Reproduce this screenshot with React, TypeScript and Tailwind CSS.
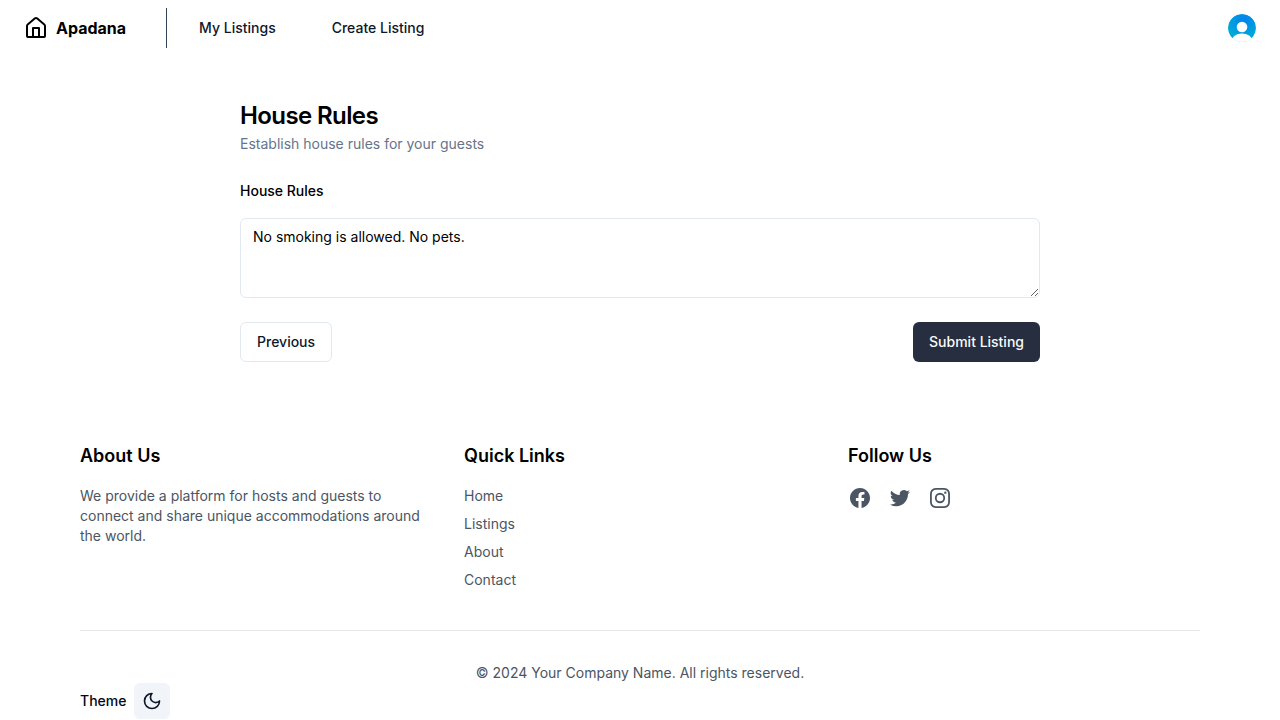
const followIcons = [
  {
    name: "Facebook",
    path: "M22 12c0-5.523-4.477-10-10-10S2 6.477 2 12c0 4.991 3.657 9.128 8.438 9.878v-6.987h-2.54V12h2.54V9.797c0-2.506 1.492-3.89 3.777-3.89 1.094 0 2.238.195 2.238.195v2.46h-1.26c-1.243 0-1.63.771-1.63 1.562V12h2.773l-.443 2.89h-2.33v6.988C18.343 21.128 22 16.991 22 12z",
  },
  {
    name: "Twitter",
    path: "M8.29 20.251c7.547 0 11.675-6.253 11.675-11.675 0-.178 0-.355-.012-.53A8.348 8.348 0 0022 5.92a8.19 8.19 0 01-2.357.646 4.118 4.118 0 001.804-2.27 8.224 8.224 0 01-2.605.996 4.107 4.107 0 00-6.993 3.743 11.65 11.65 0 01-8.457-4.287 4.106 4.106 0 001.27 5.477A4.072 4.072 0 012.8 9.713v.052a4.105 4.105 0 003.292 4.022 4.095 4.095 0 01-1.853.07 4.108 4.108 0 003.834 2.85A8.233 8.233 0 012 18.407a11.616 11.616 0 006.29 1.84",
  },
  {
    name: "Instagram",
    path: "M12.315 2c2.43 0 2.784.013 3.808.06 1.064.049 1.791.218 2.427.465a4.902 4.902 0 011.772 1.153 4.902 4.902 0 011.153 1.772c.247.636.416 1.363.465 2.427.048 1.067.06 1.407.06 4.123v.08c0 2.643-.012 2.987-.06 4.043-.049 1.064-.218 1.791-.465 2.427a4.902 4.902 0 01-1.153 1.772 4.902 4.902 0 01-1.772 1.153c-.636.247-1.363.416-2.427.465-1.067.048-1.407.06-4.123.06h-.08c-2.643 0-2.987-.012-4.043-.06-1.064-.049-1.791-.218-2.427-.465a4.902 4.902 0 01-1.772-1.153 4.902 4.902 0 01-1.153-1.772c-.247-.636-.416-1.363-.465-2.427-.047-1.024-.06-1.379-.06-3.808v-.63c0-2.43.013-2.784.06-3.808.049-1.064.218-1.791.465-2.427a4.902 4.902 0 011.153-1.772A4.902 4.902 0 015.45 2.525c.636-.247 1.363-.416 2.427-.465C8.901 2.013 9.256 2 11.685 2h.63zm-.081 1.802h-.468c-2.456 0-2.784.011-3.807.058-.975.045-1.504.207-1.857.344-.467.182-.8.398-1.15.748-.35.35-.566.683-.748 1.15-.137.353-.3.882-.344 1.857-.047 1.023-.058 1.351-.058 3.807v.468c0 2.456.011 2.784.058 3.807.045.975.207 1.504.344 1.857.182.466.399.8.748 1.15.35.35.683.566 1.15.748.353.137.882.3 1.857.344 1.054.048 1.37.058 4.041.058h.08c2.597 0 2.917-.01 3.96-.058.976-.045 1.505-.207 1.858-.344.466-.182.8-.398 1.15-.748.35-.35.566-.683.748-1.15.137-.353.3-.882.344-1.857.048-1.055.058-1.37.058-4.041v-.08c0-2.597-.01-2.917-.058-3.96-.045-.976-.207-1.505-.344-1.858a3.097 3.097 0 00-.748-1.15 3.098 3.098 0 00-1.15-.748c-.353-.137-.882-.3-1.857-.344-1.023-.047-1.351-.058-3.807-.058zM12 6.865a5.135 5.135 0 110 10.27 5.135 5.135 0 010-10.27zm0 1.802a3.333 3.333 0 100 6.666 3.333 3.333 0 000-6.666zm5.338-3.205a1.2 1.2 0 110 2.4 1.2 1.2 0 010-2.4z",
  },
];

const quickLinks = ["Home", "Listings", "About", "Contact"];

function Header() {
  return (
    <header className="flex h-14 items-center justify-between px-6">
      <nav className="flex h-full items-center text-sm font-medium text-[#0f172a]">
        <a href="#" className="flex items-center gap-2 text-base font-bold text-black">
          <svg className="size-6" viewBox="0 0 24 24" fill="none" stroke="currentColor" strokeWidth="2" strokeLinecap="round" strokeLinejoin="round">
            <path d="M15 21v-9H9v9" />
            <path d="M3 10a2 2 0 0 1 .709-1.528l7-5.999a2 2 0 0 1 2.582 0l7 5.999A2 2 0 0 1 21 10v10a1 1 0 0 1-1 1H4a1 1 0 0 1-1-1z" />
          </svg>
          Apadana
        </a>
        <div className="ml-10 h-10 w-px bg-[#334155]" />
        <a href="#" className="ml-8">My Listings</a>
        <a href="#" className="ml-14">Create Listing</a>
      </nav>
      <button aria-label="Account" className="size-7 overflow-hidden rounded-full">
        <svg viewBox="0 0 28 28" className="size-7">
          <defs>
            <radialGradient id="avatar" gradientUnits="userSpaceOnUse" cx="16" cy="6" r="17">
              <stop offset="0" stopColor="#0082ee" />
              <stop offset="1" stopColor="#00a8d8" />
            </radialGradient>
          </defs>
          <circle cx="14" cy="14" r="14" fill="url(#avatar)" />
          <circle cx="14" cy="13" r="5.3" fill="#fff" />
          <ellipse cx="14" cy="27" rx="10.5" ry="7.5" fill="#fff" />
        </svg>
      </button>
    </header>
  );
}

export default function App() {
  return (
    <div className="h-[720px] overflow-hidden bg-white font-['Inter',sans-serif] text-black antialiased">
      <Header />
      <main className="mx-auto mt-11 w-[800px]">
        <h1 className="text-2xl font-semibold tracking-tight">House Rules</h1>
        <p className="mt-0.5 text-sm text-[#64748b]">Establish house rules for your guests</p>
        <label htmlFor="rules" className="mt-[30px] block text-sm leading-[14px] font-medium">House Rules</label>
        <textarea id="rules" defaultValue="No smoking is allowed. No pets." className="mt-5 block h-20 w-full rounded-md border border-[#e2e8f0] px-3 py-2 text-sm" />
        <div className="mt-6 flex justify-between text-sm font-medium">
          <button className="h-10 rounded-md border border-[#e2e8f0] px-4 text-[#0f172a]">Previous</button>
          <button className="h-10 rounded-md bg-[#272e3f] px-4 text-[#f8fafc]">Submit Listing</button>
        </div>
      </main>
      <footer className="mx-auto mt-20 w-[1120px] text-sm text-[#4b5563]">
        <div className="grid grid-cols-3 gap-8">
          <section>
            <h2 className="mb-4 text-lg font-semibold text-black">About Us</h2>
            <p>We provide a platform for hosts and guests to connect and share unique accommodations around the world.</p>
          </section>
          <section>
            <h2 className="mb-4 text-lg font-semibold text-black">Quick Links</h2>
            <ul className="space-y-2">
              {quickLinks.map((link) => (
                <li key={link}><a href="#">{link}</a></li>
              ))}
            </ul>
          </section>
          <section>
            <h2 className="mb-4 text-lg font-semibold text-black">Follow Us</h2>
            <div className="flex gap-4">
              {followIcons.map((icon) => (
                <a key={icon.name} href="#" aria-label={icon.name}>
                  <svg className="size-6" viewBox="0 0 24 24" fill="currentColor">
                    <path fillRule="evenodd" clipRule="evenodd" d={icon.path} />
                  </svg>
                </a>
              ))}
            </div>
          </section>
        </div>
        <div className="mt-10 border-t border-[#e5e7eb] pt-8">
          <p className="text-center">© 2024 Your Company Name. All rights reserved.</p>
          <div className="flex items-center gap-2 font-medium text-[#020817]">
            Theme
            <button aria-label="Toggle theme" className="flex size-9 items-center justify-center rounded-md bg-[#f1f5f9] text-[#0f172a]">
              <svg className="size-5" viewBox="0 0 24 24" fill="none" stroke="currentColor" strokeWidth="2" strokeLinecap="round" strokeLinejoin="round">
                <path d="M12 3a6 6 0 0 0 9 9 9 9 0 1 1-9-9Z" />
              </svg>
            </button>
          </div>
        </div>
      </footer>
    </div>
  );
}
